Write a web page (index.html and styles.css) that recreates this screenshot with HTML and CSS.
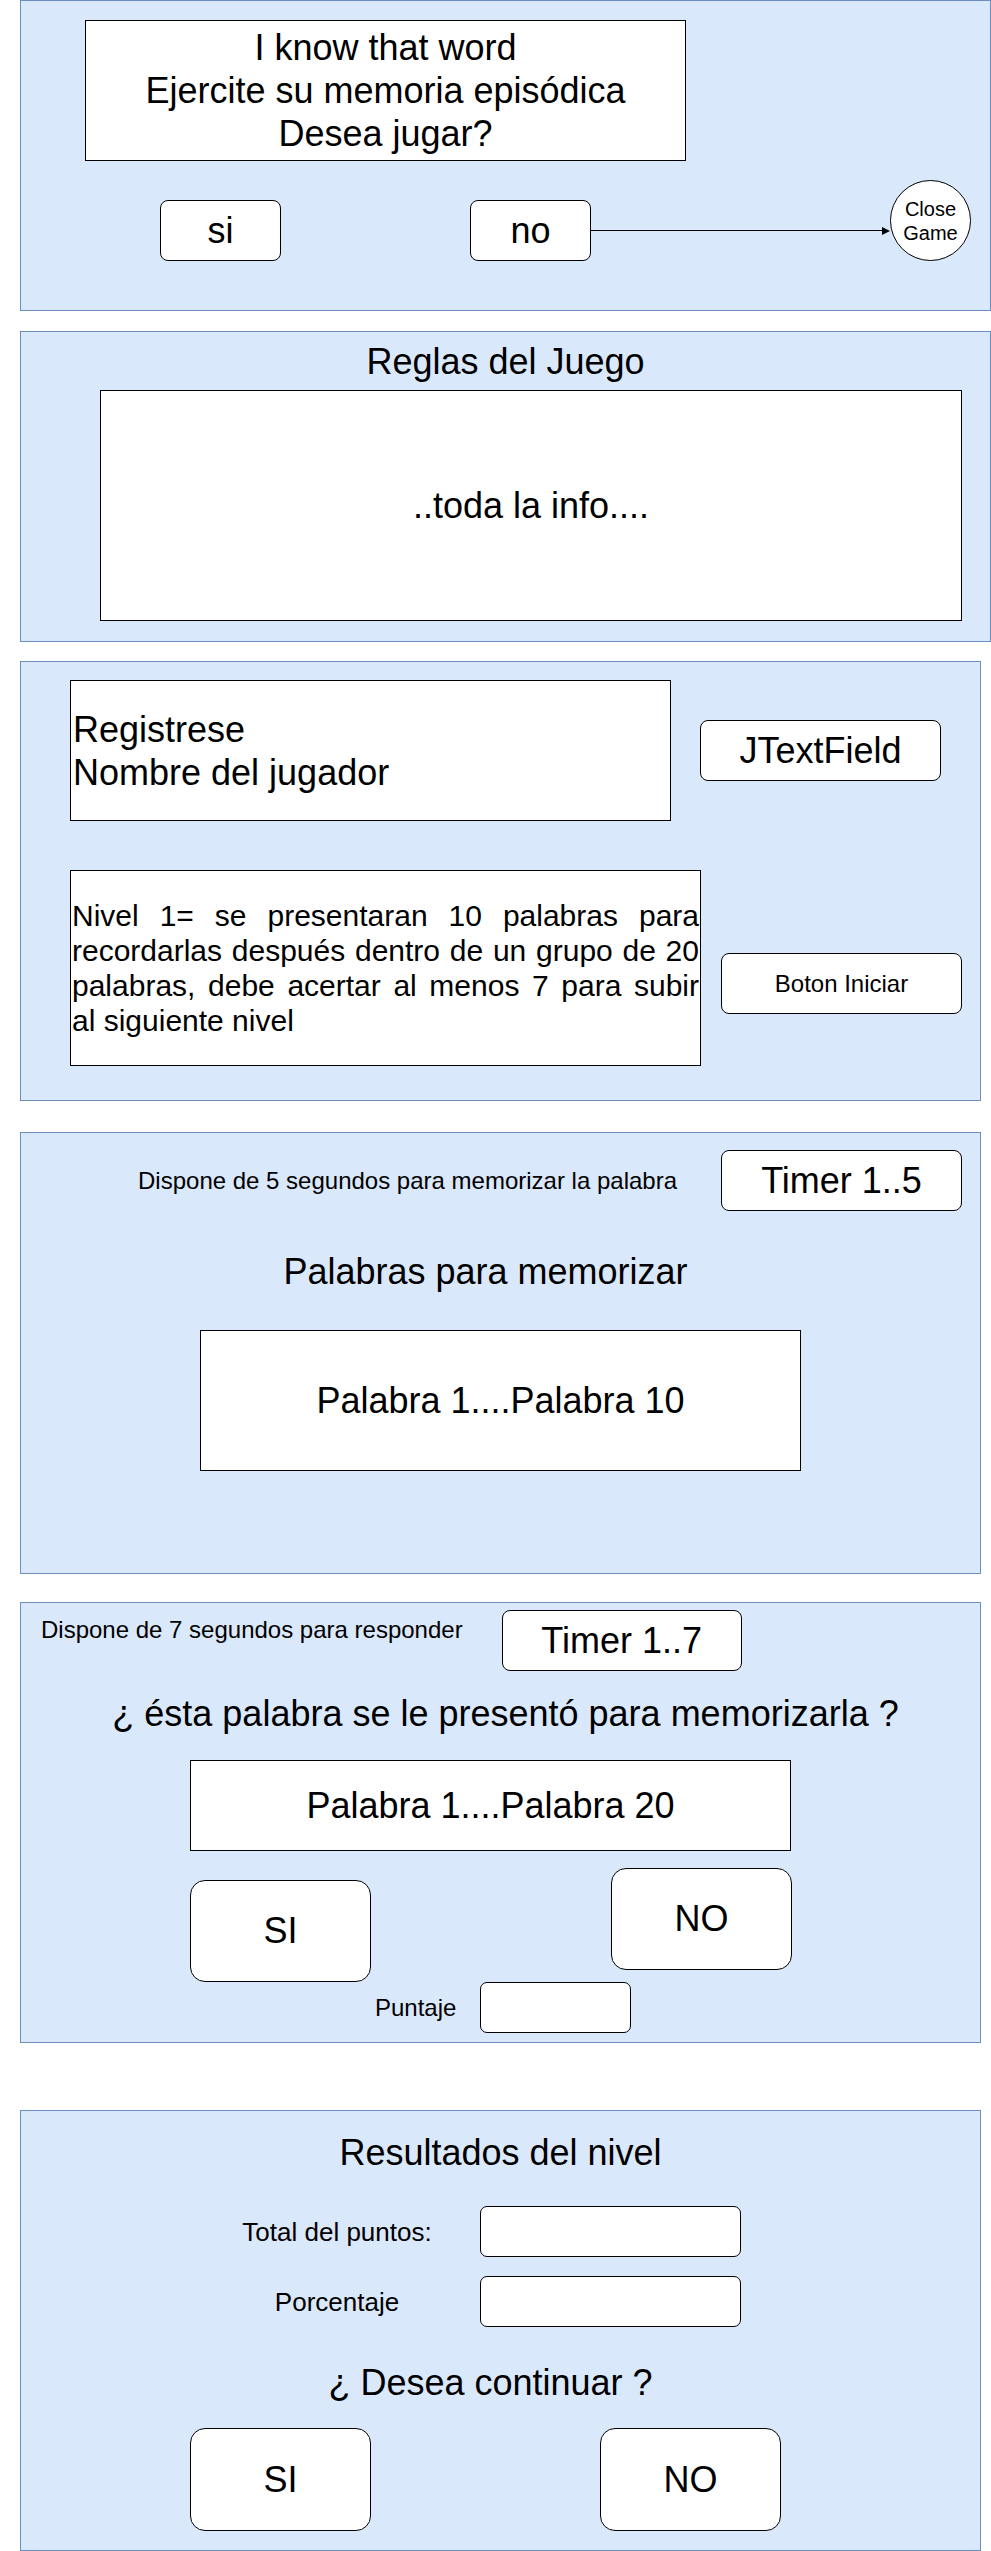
FILE: index.html
```html
<!DOCTYPE html>
<html lang="es">
<head>
  <meta charset="UTF-8">
  <meta name="viewport" content="width=device-width, initial-scale=1.0">
  <title>I know that word - Mockup</title>
  <link rel="stylesheet" href="styles.css">
</head>
<body>
  <!-- Pantalla de inicio -->
  <section class="panel panel-wide start">
    <div class="box title-box">
      I know that word<br>
      Ejercite su memoria episódica<br>
      Desea jugar?
    </div>
    <div class="start-row">
      <div class="btn btn-small btn-si">si</div>
      <div class="btn btn-small btn-no">no</div>
      <div class="connector">
        <span class="line"></span>
        <span class="head"></span>
      </div>
      <div class="close-game">Close<br>Game</div>
    </div>
  </section>

  <!-- Reglas -->
  <section class="panel panel-wide rules">
    <h2 class="heading">Reglas del Juego</h2>
    <div class="box rules-box">..toda la info....</div>
  </section>

  <!-- Registro -->
  <section class="panel register">
    <div class="register-row">
      <div class="box name-box">Registrese<br>Nombre del jugador</div>
      <div class="btn btn-field">JTextField</div>
    </div>
    <div class="register-row level-row">
      <div class="box level-box">Nivel 1= se presentaran 10 palabras para recordarlas después dentro de un grupo de 20 palabras, debe acertar al menos 7 para subir al&nbsp;siguiente nivel</div>
      <div class="btn btn-field btn-start">Boton Iniciar</div>
    </div>
  </section>

  <!-- Memorizar -->
  <section class="panel memorize">
    <div class="timer-row">
      <span class="hint">Dispone de 5 segundos para memorizar la palabra</span>
      <div class="btn btn-field btn-timer">Timer 1..5</div>
    </div>
    <h2 class="heading memorize-heading">Palabras para memorizar</h2>
    <div class="box words-box">Palabra 1....Palabra 10</div>
  </section>

  <!-- Responder -->
  <section class="panel answer">
    <div class="answer-top">
      <span class="hint answer-hint">Dispone de 7 segundos para responder</span>
      <div class="btn btn-field btn-timer">Timer 1..7</div>
    </div>
    <h2 class="heading answer-heading">¿ ésta palabra se le presentó para memorizarla ?</h2>
    <div class="box words-box answer-box">Palabra 1....Palabra 20</div>
    <div class="choice-row answer-choices">
      <div class="btn btn-big btn-yes">SI</div>
      <div class="btn btn-big btn-nope">NO</div>
    </div>
    <div class="score-row">
      <span class="hint score-label">Puntaje</span>
      <div class="btn score-box"></div>
    </div>
  </section>

  <!-- Resultados -->
  <section class="panel results">
    <h2 class="heading results-heading">Resultados del nivel</h2>
    <div class="results-grid">
      <span class="hint">Total del puntos:</span>
      <div class="btn result-field"></div>
      <span class="hint">Porcentaje</span>
      <div class="btn result-field"></div>
    </div>
    <h2 class="heading continue-heading">¿ Desea continuar ?</h2>
    <div class="choice-row results-choices">
      <div class="btn btn-big btn-yes">SI</div>
      <div class="btn btn-big btn-nope">NO</div>
    </div>
  </section>
</body>
</html>
```

FILE: styles.css
```css
body {
  margin: 0;
  background-color: #fff;
  font-family: "Liberation Sans", Arial, Helvetica, sans-serif;
  color: #000;
}
.panel {
  box-sizing: border-box;
  width: 961px;
  margin-left: 20px;
  background-color: #dae8fc;
  border: 1px solid #6c8ebf;
}
.panel-wide {
  width: 971px;
}
.heading {
  margin: 0;
  font-size: 36px;
  font-weight: normal;
  line-height: 43px;
  text-align: center;
}
.hint {
  font-size: 24px;
  line-height: 28px;
}
.box {
  box-sizing: border-box;
  background-color: #fff;
  border: 1px solid #000;
  font-size: 36px;
  line-height: 43px;
}
.btn {
  box-sizing: border-box;
  display: flex;
  justify-content: center;
  align-items: center;
  background-color: #fff;
  border: 1px solid #000;
  border-radius: 8px;
  font-size: 36px;
}

/* inicio */
.start {
  height: 311px;
  padding-top: 19px;
}
.title-box {
  width: 601px;
  height: 141px;
  margin-left: 64px;
  display: flex;
  align-items: center;
  justify-content: center;
  text-align: center;
}
.start-row {
  display: flex;
  align-items: flex-start;
  margin-top: 19px;
  padding-right: 19px;
}
.btn-small {
  width: 121px;
  height: 61px;
  margin-top: 20px;
}
.btn-si {
  margin-left: 139px;
}
.btn-no {
  margin-left: 189px;
}
.connector {
  flex: 1;
  height: 61px;
  margin-top: 20px;
  display: flex;
  align-items: center;
}
.connector .line {
  flex: 1;
  height: 1px;
  background-color: #000;
}
.connector .head {
  width: 0;
  height: 0;
  border-left: 8px solid #000;
  border-top: 4px solid transparent;
  border-bottom: 4px solid transparent;
}
.close-game {
  box-sizing: border-box;
  width: 81px;
  height: 81px;
  border: 1px solid #000;
  border-radius: 50%;
  background-color: #fff;
  display: flex;
  align-items: center;
  justify-content: center;
  text-align: center;
  font-size: 20px;
  line-height: 24px;
}

/* reglas */
.rules {
  height: 311px;
  margin-top: 20px;
  padding-top: 8px;
}
.rules-box {
  width: 862px;
  height: 231px;
  margin: 7px 0 0 79px;
  display: flex;
  align-items: center;
  justify-content: center;
}

/* registro */
.register {
  height: 440px;
  margin-top: 19px;
  padding-top: 18px;
}
.register-row {
  display: flex;
  align-items: center;
  padding-left: 49px;
}
.name-box {
  width: 601px;
  height: 141px;
  display: flex;
  align-items: center;
  padding-left: 2px;
}
.btn-field {
  width: 241px;
  height: 61px;
  margin-left: 29px;
}
.level-row {
  align-items: flex-start;
  margin-top: 49px;
}
.level-box {
  width: 631px;
  height: 196px;
  display: flex;
  align-items: center;
  padding: 0 1px;
  font-size: 30px;
  line-height: 35px;
  text-align: justify;
}
.btn-start {
  margin: 83px 0 0 20px;
  font-size: 24px;
}

/* memorizar */
.memorize {
  height: 442px;
  margin-top: 31px;
  padding-top: 17px;
}
.timer-row {
  display: flex;
  justify-content: flex-end;
  align-items: center;
  padding-right: 18px;
}
.btn-timer {
  margin-left: 44px;
}
.memorize-heading {
  margin-top: 39px;
  padding-right: 30px;
}
.words-box {
  width: 601px;
  height: 141px;
  margin: 37px 0 0 179px;
  display: flex;
  align-items: center;
  justify-content: center;
}

/* responder */
.answer {
  height: 441px;
  margin-top: 28px;
  padding-top: 7px;
}
.answer-top {
  display: flex;
  align-items: flex-start;
}
.answer-hint {
  margin: 6px 0 0 20px;
}
.answer-top .btn-timer {
  width: 240px;
  margin-left: 39px;
}
.answer-heading {
  margin-top: 21px;
  padding-left: 10px;
}
.answer-box {
  height: 91px;
  margin: 25px 0 0 169px;
}
.choice-row {
  display: flex;
  align-items: flex-start;
}
.btn-big {
  width: 181px;
  height: 102px;
  border-radius: 15px;
  margin-left: 169px;
}
.answer-choices {
  margin-top: 17px;
}
.answer-choices .btn-yes {
  margin-top: 12px;
}
.answer-choices .btn-nope {
  margin-left: 240px;
}
.score-row {
  display: flex;
  align-items: center;
}
.score-label {
  margin-left: 354px;
}
.score-box {
  width: 151px;
  height: 51px;
  margin-left: 24px;
  border-radius: 7px;
}

/* resultados */
.results {
  height: 441px;
  margin-top: 67px;
  padding-top: 20px;
}
.results-grid {
  display: grid;
  grid-template-columns: 280px 261px;
  grid-auto-rows: 51px;
  row-gap: 19px;
  align-items: center;
  margin: 32px 0 0 179px;
}
.results-grid .hint {
  font-size: 26px;
  line-height: 30px;
  text-align: center;
  padding-right: 6px;
}
.result-field {
  height: 51px;
  border-radius: 7px;
}
.continue-heading {
  margin-top: 34px;
  padding-right: 20px;
}
.results-choices {
  margin-top: 24px;
}
.results-choices .btn-big {
  height: 103px;
}
.results-choices .btn-nope {
  margin-left: 229px;
}
```
